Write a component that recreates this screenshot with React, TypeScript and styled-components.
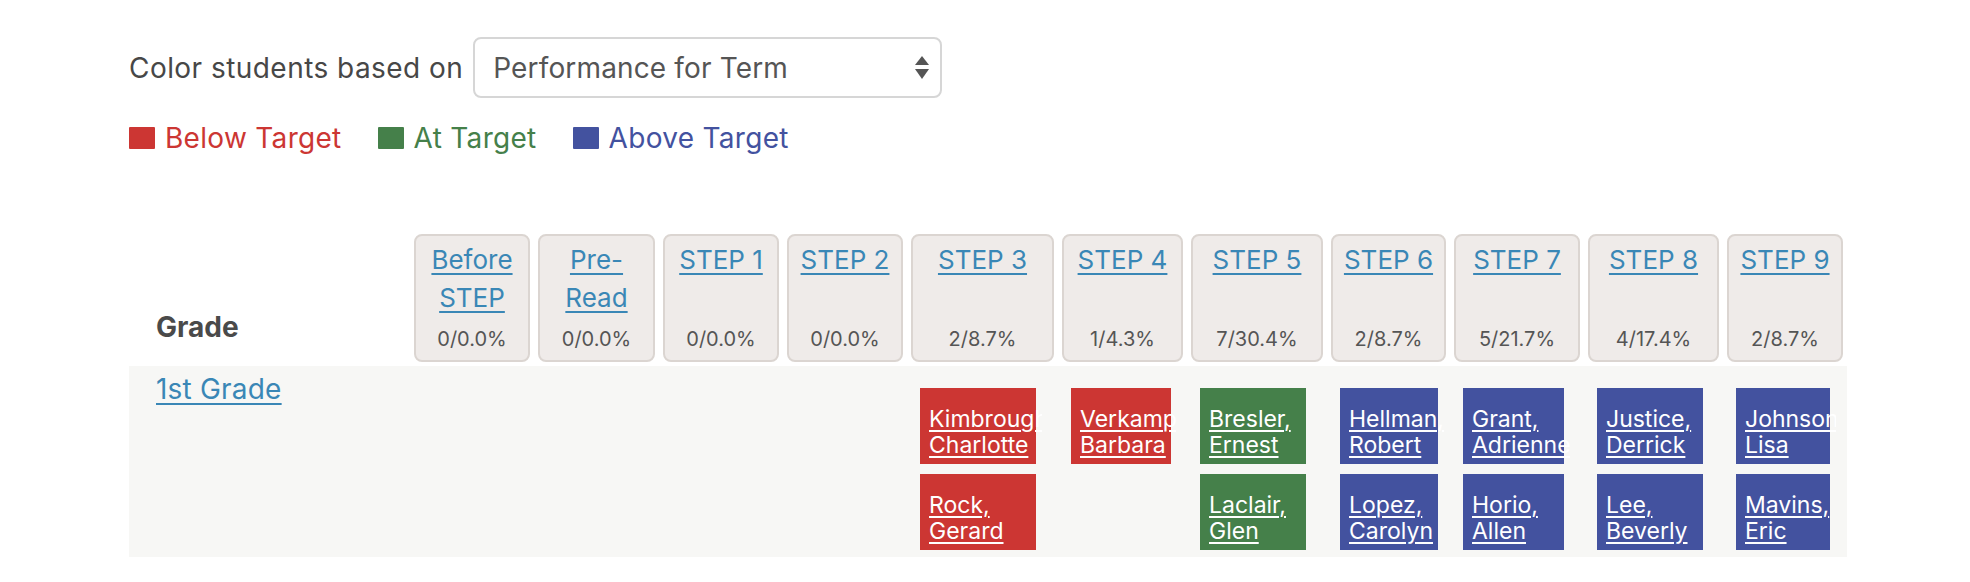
import React from "react";
import styled, { createGlobalStyle } from "styled-components";

const GlobalStyle = createGlobalStyle`
  html, body { margin: 0; padding: 0; background: #ffffff; }
  body { font-family: Inter, "Liberation Sans", sans-serif; color: #4a4a4a; }
`;

type Level = "below" | "at" | "above";

const LEVEL_COLORS: Record<Level, string> = {
  below: "#cc3633",
  at: "#45804a",
  above: "#43529f",
};

const COLS = "277px 116px 117px 116px 116px 143px 121px 132px 115px 126px 131px 116px";

interface Student {
  name: string;
  level: Level;
}

interface Step {
  label: string;
  count: string;
  boxWidth: number;
  students: Student[];
}

const STEPS: Step[] = [
  { label: "Before STEP", count: "0/0.0%", boxWidth: 98, students: [] },
  { label: "Pre-Read", count: "0/0.0%", boxWidth: 98, students: [] },
  { label: "STEP 1", count: "0/0.0%", boxWidth: 98, students: [] },
  { label: "STEP 2", count: "0/0.0%", boxWidth: 98, students: [] },
  {
    label: "STEP 3",
    count: "2/8.7%",
    boxWidth: 116,
    students: [
      { name: "Kimbrough, Charlotte", level: "below" },
      { name: "Rock, Gerard", level: "below" },
    ],
  },
  {
    label: "STEP 4",
    count: "1/4.3%",
    boxWidth: 100,
    students: [{ name: "Verkamp, Barbara", level: "below" }],
  },
  {
    label: "STEP 5",
    count: "7/30.4%",
    boxWidth: 106,
    students: [
      { name: "Bresler, Ernest", level: "at" },
      { name: "Laclair, Glen", level: "at" },
    ],
  },
  {
    label: "STEP 6",
    count: "2/8.7%",
    boxWidth: 98,
    students: [
      { name: "Hellman, Robert", level: "above" },
      { name: "Lopez, Carolyn", level: "above" },
    ],
  },
  {
    label: "STEP 7",
    count: "5/21.7%",
    boxWidth: 101,
    students: [
      { name: "Grant, Adrienne", level: "above" },
      { name: "Horio, Allen", level: "above" },
    ],
  },
  {
    label: "STEP 8",
    count: "4/17.4%",
    boxWidth: 106,
    students: [
      { name: "Justice, Derrick", level: "above" },
      { name: "Lee, Beverly", level: "above" },
    ],
  },
  {
    label: "STEP 9",
    count: "2/8.7%",
    boxWidth: 94,
    students: [
      { name: "Johnson, Lisa", level: "above" },
      { name: "Mavins, Eric", level: "above" },
    ],
  },
];

const Page = styled.div`
  padding: 37px 0 0 129px;
  width: 1718px;
`;

const FilterRow = styled.div`
  display: flex;
  align-items: center;
  gap: 10px;
  height: 61px;
`;

const FilterLabel = styled.span`
  font-size: 28px;
  line-height: 34px;
  letter-spacing: 0.45px;
  color: #474747;
`;

const SelectBox = styled.div`
  box-sizing: border-box;
  width: 469px;
  height: 61px;
  border: 2px solid #d6d6d6;
  border-radius: 8px;
  background: #ffffff;
  display: flex;
  align-items: center;
  justify-content: space-between;
  padding: 0 11px 0 18px;
  font-size: 28px;
  letter-spacing: 0.15px;
  color: #555555;
`;

const Legend = styled.div`
  display: flex;
  align-items: center;
  gap: 36px;
  margin-top: 23px;
`;

const LegendItem = styled.div<{ $color: string }>`
  display: flex;
  align-items: center;
  gap: 10px;
  font-size: 28px;
  line-height: 34px;
  letter-spacing: 0.3px;
  color: ${(p) => p.$color};
`;

const Swatch = styled.span<{ $color: string }>`
  display: block;
  width: 26px;
  height: 22px;
  border-radius: 1px;
  background: ${(p) => p.$color};
`;

const Board = styled.div`
  margin-top: 79px;
`;

const HeaderRow = styled.div`
  display: grid;
  grid-template-columns: ${COLS};
  column-gap: 8px;
`;

const GradeHeading = styled.div`
  align-self: end;
  padding: 0 0 18px 27px;
  font-size: 28px;
  line-height: 34px;
  font-weight: 700;
  color: #4a4a4a;
`;

const StepHeader = styled.div`
  box-sizing: border-box;
  height: 128px;
  border: 2px solid #dbd5d1;
  border-radius: 8px;
  background: #efebe9;
  display: flex;
  flex-direction: column;
  justify-content: space-between;
  align-items: center;
  text-align: center;
  padding: 5px 6px 9px;
`;

const StepLink = styled.a`
  font-size: 26px;
  line-height: 38px;
  color: #3a87b6;
  text-decoration: underline;
  text-decoration-thickness: 2px;
  text-underline-offset: 4px;
  cursor: pointer;
`;

const StepCount = styled.div`
  font-size: 20px;
  line-height: 24px;
  color: #555555;
`;

const BodyRow = styled.div`
  display: grid;
  grid-template-columns: ${COLS};
  column-gap: 8px;
  margin-top: 4px;
  padding: 0 4px 7px 0;
  background: #f7f7f5;
`;

const GradeCell = styled.div`
  padding: 6px 0 0 27px;
`;

const GradeLink = styled.a`
  font-size: 28px;
  line-height: 34px;
  letter-spacing: 0.2px;
  color: #3a87b6;
  text-decoration: underline;
  text-decoration-thickness: 2px;
  text-underline-offset: 4px;
  cursor: pointer;
`;

const StudentColumn = styled.div`
  display: flex;
  flex-direction: column;
  gap: 10px;
  padding: 22px 0 0 9px;
`;

const StudentBox = styled.div<{ $bg: string }>`
  box-sizing: border-box;
  height: 76px;
  background: ${(p) => p.$bg};
  display: flex;
  flex-direction: column;
  justify-content: flex-end;
  padding: 0 0 6px 9px;
  clip-path: inset(0 -6px 0 0);
`;

const StudentLink = styled.a`
  font-size: 23px;
  line-height: 26px;
  color: #ffffff;
  text-decoration: underline;
  text-decoration-thickness: 2px;
  text-underline-offset: 3px;
  cursor: pointer;
`;

const SelectArrows = () => (
  <svg width="14" height="24" viewBox="0 0 14 24" aria-hidden="true">
    <path d="M7 0 L14 9 H0 Z" fill="#555555" />
    <path d="M0 13 H14 L7 23 Z" fill="#555555" />
  </svg>
);

export default function App() {
  return (
    <>
      <GlobalStyle />
      <Page>
        <FilterRow>
          <FilterLabel>Color students based on</FilterLabel>
          <SelectBox>
            <span>Performance for Term</span>
            <SelectArrows />
          </SelectBox>
        </FilterRow>
        <Legend>
          <LegendItem $color={LEVEL_COLORS.below}>
            <Swatch $color={LEVEL_COLORS.below} />
            Below Target
          </LegendItem>
          <LegendItem $color={LEVEL_COLORS.at}>
            <Swatch $color={LEVEL_COLORS.at} />
            At Target
          </LegendItem>
          <LegendItem $color={LEVEL_COLORS.above}>
            <Swatch $color={LEVEL_COLORS.above} />
            Above Target
          </LegendItem>
        </Legend>
        <Board>
          <HeaderRow>
            <GradeHeading>Grade</GradeHeading>
            {STEPS.map((s) => (
              <StepHeader key={s.label}>
                <StepLink>{s.label}</StepLink>
                <StepCount>{s.count}</StepCount>
              </StepHeader>
            ))}
          </HeaderRow>
          <BodyRow>
            <GradeCell>
              <GradeLink>1st Grade</GradeLink>
            </GradeCell>
            {STEPS.map((s) => (
              <StudentColumn key={s.label}>
                {s.students.map((st) => (
                  <StudentBox
                    key={st.name}
                    $bg={LEVEL_COLORS[st.level]}
                    style={{ width: s.boxWidth }}
                  >
                    <div>
                      <StudentLink>{st.name}</StudentLink>
                    </div>
                  </StudentBox>
                ))}
              </StudentColumn>
            ))}
          </BodyRow>
        </Board>
      </Page>
    </>
  );
}
